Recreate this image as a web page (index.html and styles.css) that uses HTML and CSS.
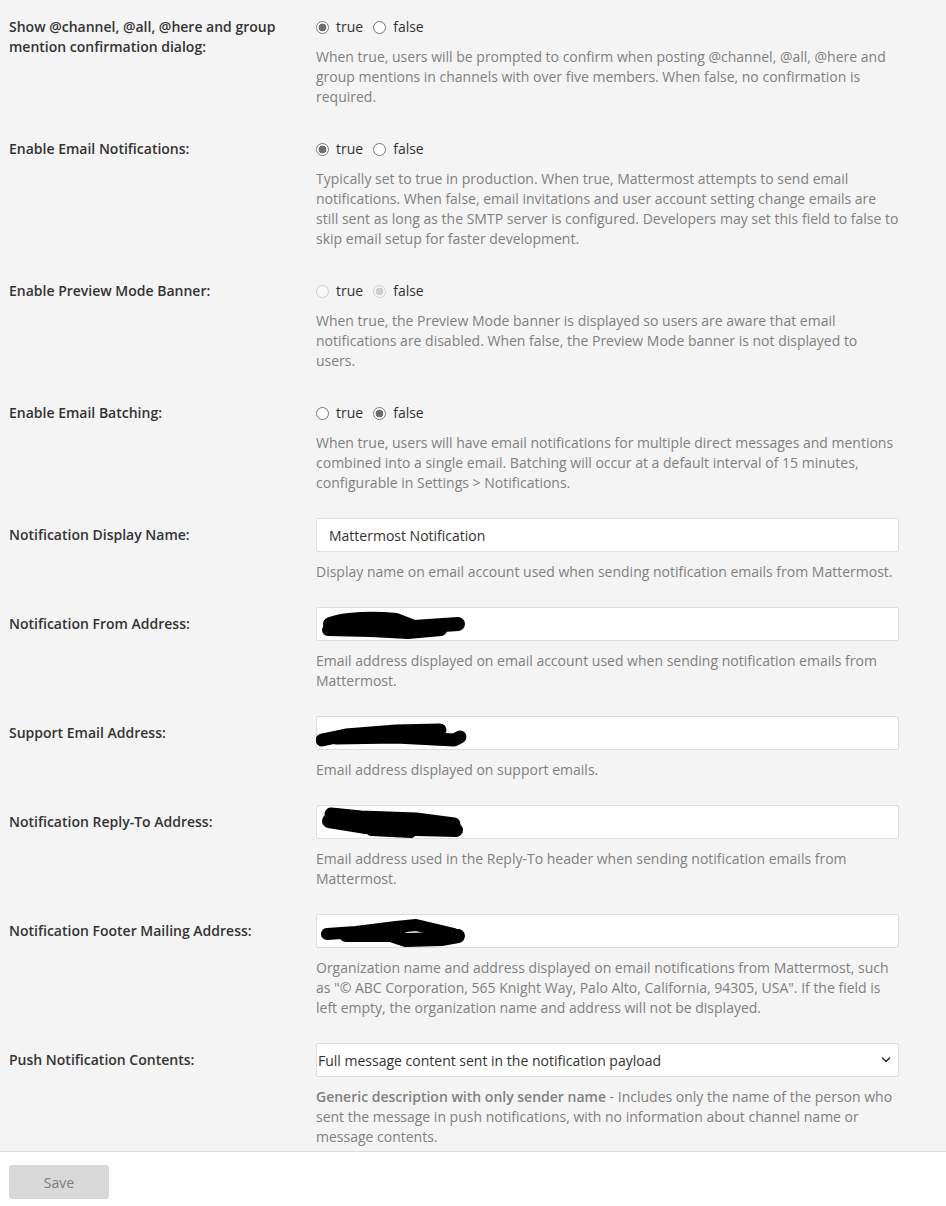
FILE: index.html
```html
<!DOCTYPE html>
<html>
<head>
<meta charset="utf-8">
<link rel="stylesheet" href="styles.css">
</head>
<body>
<div class="page">
  <main class="settings">
    <div class="form-group">
      <label class="control-label">Show @channel, @all, @here and group mention confirmation dialog:</label>
      <div class="control">
        <div class="radios">
          <label class="radio"><input type="radio" name="r1" checked><span>true</span></label>
          <label class="radio"><input type="radio" name="r1"><span>false</span></label>
        </div>
        <div class="help">When true, users will be prompted to confirm when posting @channel, @all, @here and group mentions in channels with over five members. When false, no confirmation is required.</div>
      </div>
    </div>

    <div class="form-group">
      <label class="control-label">Enable Email Notifications:</label>
      <div class="control">
        <div class="radios">
          <label class="radio"><input type="radio" name="r2" checked><span>true</span></label>
          <label class="radio"><input type="radio" name="r2"><span>false</span></label>
        </div>
        <div class="help">Typically set to true in production. When true, Mattermost attempts to send email notifications. When false, email invitations and user account setting change emails are still sent as long as the SMTP server is configured. Developers may set this field to false to skip email setup for faster development.</div>
      </div>
    </div>

    <div class="form-group">
      <label class="control-label">Enable Preview Mode Banner:</label>
      <div class="control">
        <div class="radios">
          <label class="radio disabled"><input type="radio" name="r3" disabled><span>true</span></label>
          <label class="radio disabled"><input type="radio" name="r3" checked disabled><span>false</span></label>
        </div>
        <div class="help">When true, the Preview Mode banner is displayed so users are aware that email notifications are disabled. When false, the Preview Mode banner is not displayed to users.</div>
      </div>
    </div>

    <div class="form-group">
      <label class="control-label">Enable Email Batching:</label>
      <div class="control">
        <div class="radios">
          <label class="radio"><input type="radio" name="r4"><span>true</span></label>
          <label class="radio"><input type="radio" name="r4" checked><span>false</span></label>
        </div>
        <div class="help">When true, users will have email notifications for multiple direct messages and mentions combined into a single email. Batching will occur at a default interval of 15 minutes, configurable in Settings &gt; Notifications.</div>
      </div>
    </div>

    <div class="form-group">
      <label class="control-label">Notification Display Name:</label>
      <div class="control">
        <input class="text-input" type="text" value="Mattermost Notification">
        <div class="help">Display name on email account used when sending notification emails from Mattermost.</div>
      </div>
    </div>

    <div class="form-group">
      <label class="control-label">Notification From Address:</label>
      <div class="control">
        <div class="field">
          <input class="text-input" type="text" value="">
          <svg class="redact" width="583" height="34" viewBox="0 0 583 34">
            <path d="M14 17 C30 11 60 11 80 13 L98 20 L142 17" fill="none" stroke="#000" stroke-width="14" stroke-linecap="round" stroke-linejoin="round"/>
            <path d="M12 23 L55 24 L92 26 L125 23" fill="none" stroke="#000" stroke-width="12" stroke-linecap="round" stroke-linejoin="round"/>
          </svg>
        </div>
        <div class="help">Email address displayed on email account used when sending notification emails from Mattermost.</div>
      </div>
    </div>

    <div class="form-group">
      <label class="control-label">Support Email Address:</label>
      <div class="control">
        <div class="field">
          <input class="text-input" type="text" value="">
          <svg class="redact" width="583" height="34" viewBox="0 0 583 34">
            <path d="M6 24 L30 19 L80 15 L124 14" fill="none" stroke="#000" stroke-width="13" stroke-linecap="round" stroke-linejoin="round"/>
            <path d="M20 22 L80 21 L138 24 L144 21" fill="none" stroke="#000" stroke-width="13" stroke-linecap="round" stroke-linejoin="round"/>
          </svg>
        </div>
        <div class="help">Email address displayed on support emails.</div>
      </div>
    </div>

    <div class="form-group">
      <label class="control-label">Notification Reply-To Address:</label>
      <div class="control">
        <div class="field">
          <input class="text-input" type="text" value="">
          <svg class="redact" width="583" height="34" viewBox="0 0 583 34">
            <path d="M15 9 L45 12 L100 14 L138 19" fill="none" stroke="#000" stroke-width="13" stroke-linecap="round" stroke-linejoin="round"/>
            <path d="M13 16 L50 22 L100 24 L140 25" fill="none" stroke="#000" stroke-width="14" stroke-linecap="round" stroke-linejoin="round"/>
            <path d="M55 26 L95 28" fill="none" stroke="#000" stroke-width="10" stroke-linecap="round"/>
          </svg>
        </div>
        <div class="help">Email address used in the Reply-To header when sending notification emails from Mattermost.</div>
      </div>
    </div>

    <div class="form-group">
      <label class="control-label">Notification Footer Mailing Address:</label>
      <div class="control">
        <div class="field">
          <input class="text-input" type="text" value="">
          <svg class="redact" width="583" height="34" viewBox="0 0 583 34">
            <path d="M11 20 L40 18 L80 13 L100 11 L138 20" fill="none" stroke="#000" stroke-width="12" stroke-linecap="round" stroke-linejoin="round"/>
            <path d="M30 21 L75 21 L90 26 L125 25 L142 22" fill="none" stroke="#000" stroke-width="14" stroke-linecap="round" stroke-linejoin="round"/>
          </svg>
        </div>
        <div class="help">Organization name and address displayed on email notifications from Mattermost, such as "© ABC Corporation, 565 Knight Way, Palo Alto, California, 94305, USA". If the field is left empty, the organization name and address will not be displayed.</div>
      </div>
    </div>

    <div class="form-group">
      <label class="control-label">Push Notification Contents:</label>
      <div class="control">
        <div class="field">
          <select class="select-input">
            <option>Full message content sent in the notification payload</option>
          </select>
          <svg class="chevron" width="10" height="8" viewBox="0 0 10 8">
            <path d="M1.5 2 L5 5.5 L8.5 2" fill="none" stroke="#333" stroke-width="1.6" stroke-linecap="round" stroke-linejoin="round"/>
          </svg>
        </div>
        <div class="help"><strong>Generic description with only sender name</strong> - Includes only the name of the person who sent the message in push notifications, with no information about channel name or message contents.</div>
      </div>
    </div>
  </main>
  <footer class="footer">
    <button class="save-btn" type="button">Save</button>
  </footer>
</div>
</body>
</html>
```

FILE: styles.css
```css
* { box-sizing: border-box; }

html, body {
  margin: 0;
  padding: 0;
}

body {
  font-family: "Open Sans", "Noto Sans", sans-serif;
  font-size: 14px;
  line-height: 20px;
  color: #333333;
  background: #f4f4f4;
}

.page {
  height: 1206px;
  display: flex;
  flex-direction: column;
  overflow: hidden;
}

.settings {
  flex: 1;
  overflow: hidden;
  padding: 10px 0 0 9px;
}

.form-group {
  display: grid;
  grid-template-columns: 292px 583px;
  column-gap: 15px;
  margin-bottom: 25px;
}

.control-label {
  font-weight: 600;
  color: #333333;
  padding-top: 7px;
}

.control {
  min-width: 0;
}

.radios {
  display: flex;
  align-items: center;
  gap: 10px;
  padding-top: 7px;
  height: 27px;
}

.radio {
  display: flex;
  align-items: center;
  gap: 7px;
  color: #333333;
}

.radio input {
  appearance: none;
  -webkit-appearance: none;
  margin: 0;
  width: 13px;
  height: 13px;
  border-radius: 50%;
  border: 1px solid #767676;
  background: #ffffff;
  position: relative;
}

.radio input:checked {
  border-color: #7a7a7a;
  background: radial-gradient(circle, #6f6f6f 0 3.6px, #ffffff 4.2px);
}

.radio.disabled input {
  border-color: #cfcfcf;
  background: #f8f8f8;
}

.radio.disabled input:checked {
  border-color: #cfcfcf;
  background: radial-gradient(circle, #cdcdcd 0 3.6px, #f8f8f8 4.2px);
}

.help {
  margin-top: 10px;
  color: #808080;
}

.help strong {
  font-weight: 600;
}

.field {
  position: relative;
  height: 34px;
}

.text-input,
.select-input {
  display: block;
  width: 583px;
  height: 34px;
  margin: 0;
  padding: 0 12px;
  border: 1px solid #dddddd;
  border-radius: 2px;
  background: #ffffff;
  font-family: "Open Sans", "Noto Sans", sans-serif;
  font-size: 14px;
  color: #333333;
  outline: none;
}

.select-input {
  appearance: none;
  -webkit-appearance: none;
  padding-left: 1px;
}

.redact {
  position: absolute;
  left: 0;
  top: 0;
  pointer-events: none;
}

.chevron {
  position: absolute;
  right: 8px;
  top: 13px;
  pointer-events: none;
}

.footer {
  flex: 0 0 55px;
  background: #ffffff;
  border-top: 1px solid #dddddd;
  padding: 13px 0 0 9px;
}

.save-btn {
  width: 100px;
  height: 34px;
  border: none;
  border-radius: 3px;
  background: #d9d9d9;
  color: #7d7d7d;
  font-family: "Open Sans", "Noto Sans", sans-serif;
  font-size: 14px;
  padding: 0;
}
```
